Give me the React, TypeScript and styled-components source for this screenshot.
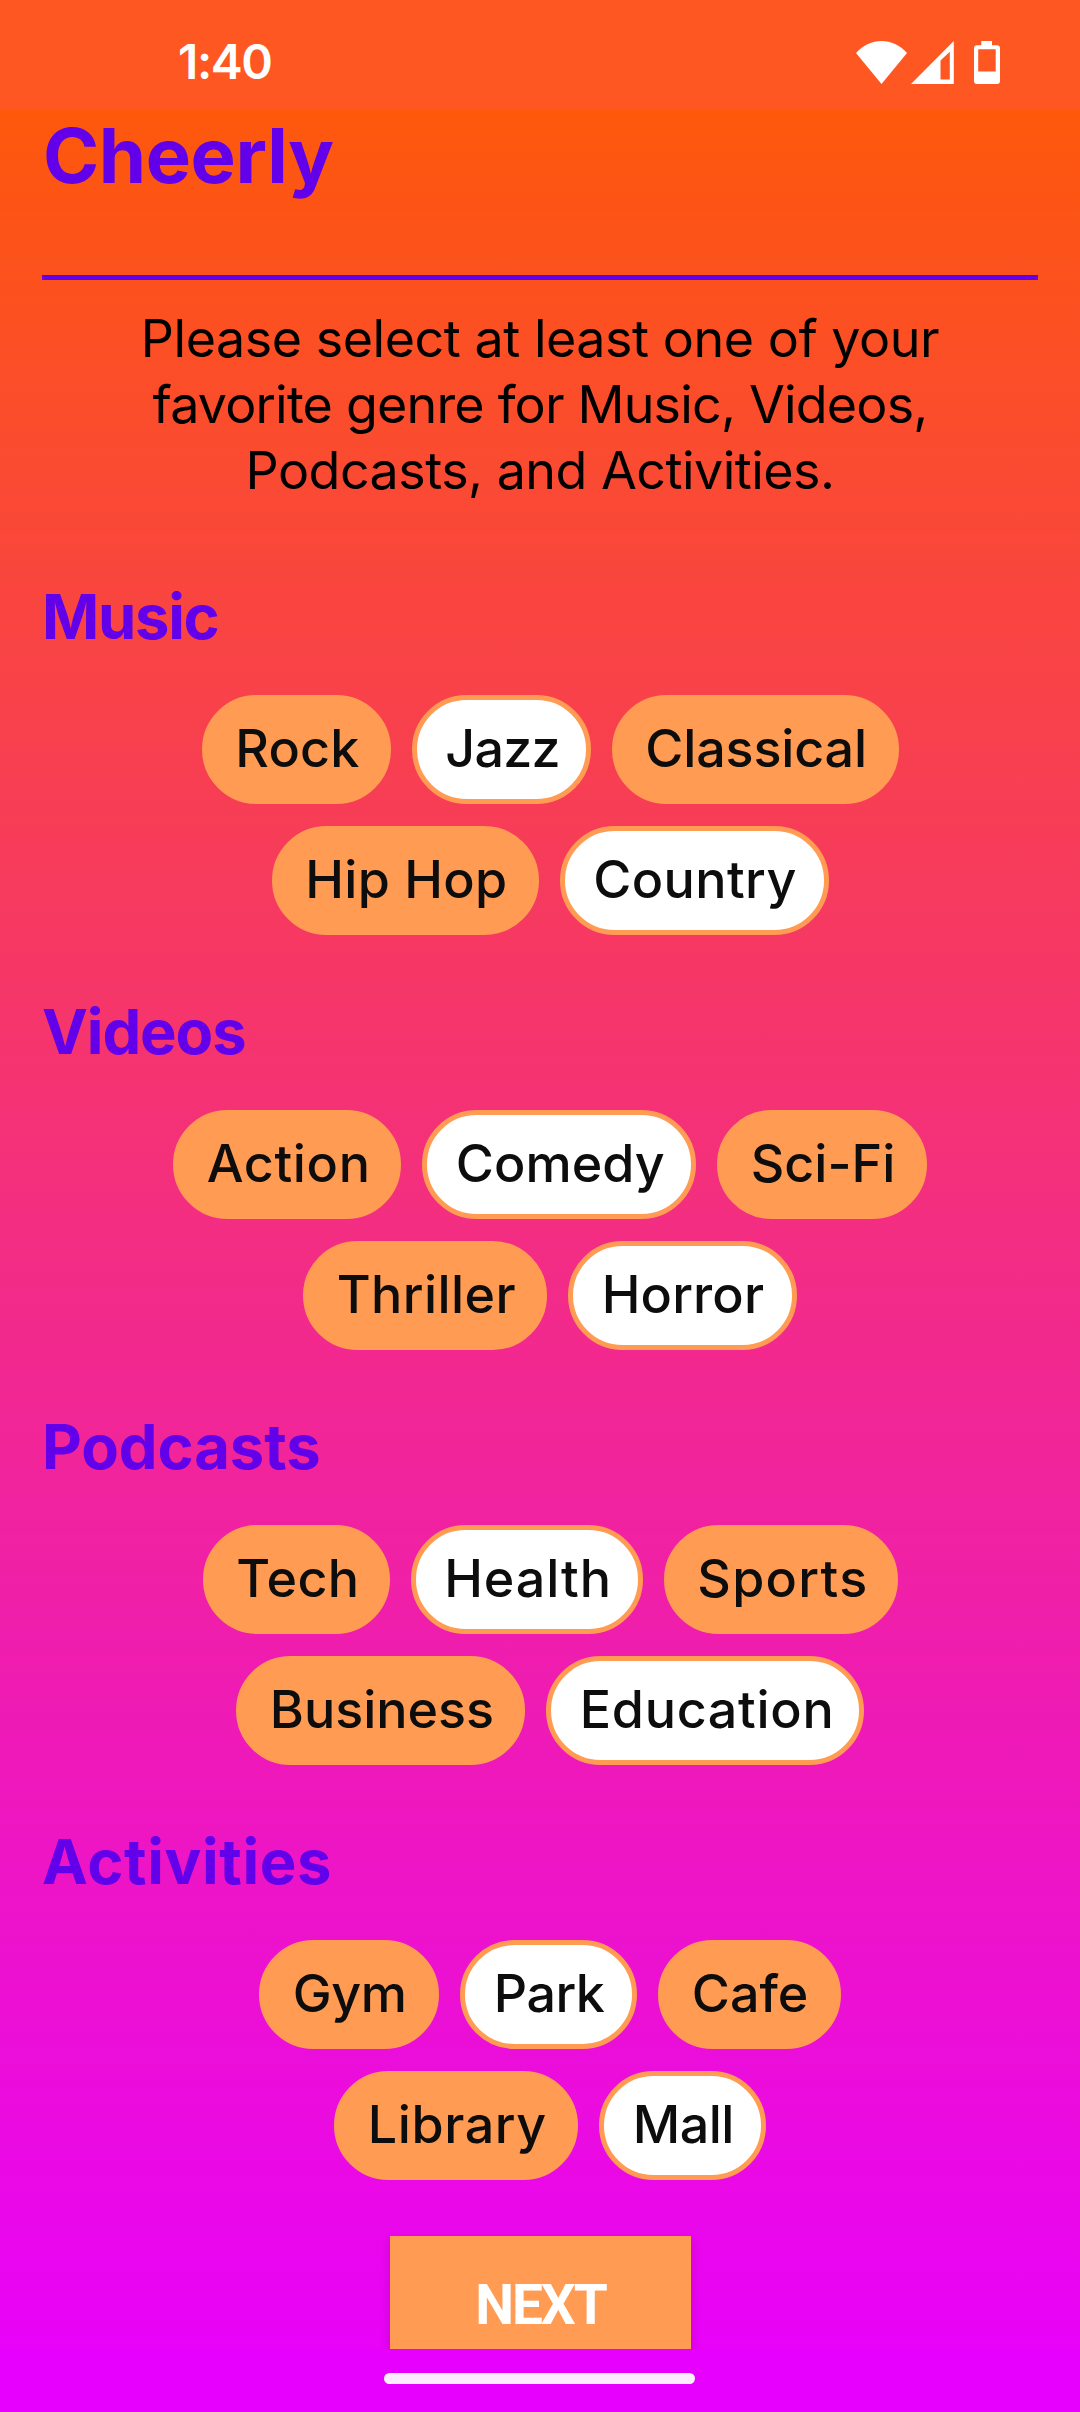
import React, { useState } from "react";
import styled, { createGlobalStyle } from "styled-components";

const colors = {
  status: "#ff5722",
  gradientTop: "#ff5c00",
  gradientBottom: "#e800ff",
  accent: "#6200ea",
  chip: "#ff9b52",
  chipText: "#0d0d0d",
};

const GlobalStyle = createGlobalStyle`
  body {
    margin: 0;
    font-family: Inter, Roboto, sans-serif;
  }
`;

const Screen = styled.div`
  display: flex;
  flex-direction: column;
  width: 1080px;
  height: 2412px;
  overflow: hidden;
  background: linear-gradient(to bottom, ${colors.gradientTop}, ${colors.gradientBottom});
`;

const StatusBar = styled.header`
  display: flex;
  flex: none;
  align-items: flex-start;
  justify-content: space-between;
  box-sizing: border-box;
  height: 110px;
  padding: 0 80px 0 178px;
  background: ${colors.status};
`;

const Clock = styled.span`
  color: #fff;
  font-size: 48px;
  font-weight: 570;
  line-height: 124px;
  letter-spacing: -1.4px;
`;

const StatusIcons = styled.svg`
  display: block;
  width: 144px;
  height: 43px;
  margin-top: 41px;
  fill: #fff;
`;

const Content = styled.main`
  display: flex;
  flex: none;
  flex-direction: column;
  height: 2239px;
  overflow: hidden;
`;

const TitleBar = styled.div`
  flex: none;
  box-sizing: border-box;
  height: 170px;
  margin: 0 42px;
  border-bottom: 5px solid ${colors.accent};
`;

const Title = styled.h1`
  margin: 0 0 0 1px;
  color: ${colors.accent};
  font-size: 76px;
  font-weight: 650;
  line-height: 91px;
  letter-spacing: -0.4px;
`;

const Intro = styled.p`
  display: flex;
  flex: none;
  flex-direction: column;
  align-items: center;
  margin: 26px 0 76px;
  color: #000;
  font-size: 52px;
  font-weight: 400;
  line-height: 66px;
`;

const IntroLine = styled.span<{ $tracking: number }>`
  letter-spacing: ${(p) => p.$tracking}px;
  white-space: nowrap;
`;

const Sections = styled.div`
  display: flex;
  flex: none;
  flex-direction: column;
  gap: 60px;
`;

const Section = styled.section`
  display: flex;
  flex-direction: column;
`;

const SectionTitle = styled.h2<{ $tracking: number }>`
  margin: 0 0 41px 42px;
  color: ${colors.accent};
  font-size: 61.5px;
  font-weight: 650;
  line-height: 74px;
  letter-spacing: ${(p) => p.$tracking}px;
`;

const ChipRows = styled.div`
  display: flex;
  flex-direction: column;
  gap: 22px;
  padding-left: 20.5px;
`;

const ChipRow = styled.div`
  display: flex;
  justify-content: center;
  gap: 21px;
`;

const Chip = styled.button<{ $selected: boolean; $width: number; $tracking: number }>`
  display: flex;
  flex: none;
  align-items: center;
  box-sizing: border-box;
  width: ${(p) => p.$width}px;
  height: 109px;
  padding: 0 0 1px 28.5px;
  border: 5px solid ${colors.chip};
  border-radius: 55px;
  background: ${(p) => (p.$selected ? "#fff" : colors.chip)};
  color: ${colors.chipText};
  font-family: inherit;
  font-size: 52px;
  font-weight: 500;
  line-height: 66px;
  letter-spacing: ${(p) => p.$tracking}px;
  white-space: nowrap;
`;

const NextButton = styled.button`
  flex: none;
  align-self: center;
  width: 301px;
  height: 138px;
  margin: 56px 0 0 1px;
  padding: 0;
  border: 0;
  background: ${colors.chip};
  box-shadow: 0 5px 10px rgba(0, 0, 0, 0.15);
  color: #fff;
  font-family: Roboto, sans-serif;
  font-size: 55px;
  font-weight: 700;
  line-height: 138px;
  letter-spacing: -2.1px;
`;

const NavigationArea = styled.footer`
  display: flex;
  flex: none;
  justify-content: center;
  height: 63px;
  background: ${colors.gradientBottom};
`;

const HomeIndicator = styled.div`
  width: 311px;
  height: 11px;
  margin: 24px 1px 0 0;
  border-radius: 6px;
  background: #fdebff;
`;

type Genre = { label: string; width: number; tracking: number };
type Group = { title: string; tracking: number; rows: Genre[][] };

const genre = (label: string, width: number, tracking: number): Genre => ({ label, width, tracking });

const groups: Group[] = [
  {
    title: "Music",
    tracking: -1.3,
    rows: [
      [genre("Rock", 189, 0.2), genre("Jazz", 179, -0.75), genre("Classical", 287, -0.15)],
      [genre("Hip Hop", 267, 0.3), genre("Country", 269, 0.4)],
    ],
  },
  {
    title: "Videos",
    tracking: -1.1,
    rows: [
      [genre("Action", 228, 0.65), genre("Comedy", 274, 0.05), genre("Sci-Fi", 210, 0)],
      [genre("Thriller", 244, 0.4), genre("Horror", 229, 0.15)],
    ],
  },
  {
    title: "Podcasts",
    tracking: -0.1,
    rows: [
      [genre("Tech", 187, 0.35), genre("Health", 232, 0.9), genre("Sports", 234, 1.3)],
      [genre("Business", 289, 0), genre("Education", 318, 0.7)],
    ],
  },
  {
    title: "Activities",
    tracking: 0.65,
    rows: [
      [genre("Gym", 180, -0.4), genre("Park", 177, -0.5), genre("Cafe", 183, 0)],
      [genre("Library", 244, 0.6), genre("Mall", 167, -0.5)],
    ],
  },
];

const initialSelection = ["Jazz", "Country", "Comedy", "Horror", "Health", "Education", "Park", "Mall"];

export default function App() {
  const [selected, setSelected] = useState<string[]>(initialSelection);

  const toggle = (label: string) =>
    setSelected((current) =>
      current.includes(label) ? current.filter((item) => item !== label) : [...current, label]
    );

  return (
    <>
      <GlobalStyle />
      <Screen>
        <StatusBar>
          <Clock>1:40</Clock>
          <StatusIcons viewBox="0 0 144 43" aria-hidden="true">
            <path d="M0 12 C14 -4 37 -4 51 12 L25.5 43 Z" />
            <path fillRule="evenodd" d="M55 43 L97.8 0 V43 Z M84.5 19.5 V38.5 H93.8 V10.7 Z" />
            <path
              fillRule="evenodd"
              d="M125.3 0 H136 V4.3 H141 Q144 4.3 144 7.3 V40 Q144 43 141 43 H121 Q118 43 118 40 V7.3 Q118 4.3 121 4.3 H125.3 Z M122.2 8.3 V30.5 H139.7 V8.3 Z"
            />
          </StatusIcons>
        </StatusBar>

        <Content>
          <TitleBar>
            <Title>Cheerly</Title>
          </TitleBar>

          <Intro>
            <IntroLine $tracking={-0.47}>Please select at least one of your</IntroLine>
            <IntroLine $tracking={-0.81}>favorite genre for Music, Videos,</IntroLine>
            <IntroLine $tracking={-0.53}>Podcasts, and Activities.</IntroLine>
          </Intro>

          <Sections>
            {groups.map((group) => (
              <Section key={group.title}>
                <SectionTitle $tracking={group.tracking}>{group.title}</SectionTitle>
                <ChipRows>
                  {group.rows.map((row) => (
                    <ChipRow key={row[0].label}>
                      {row.map((item) => (
                        <Chip
                          key={item.label}
                          type="button"
                          $selected={selected.includes(item.label)}
                          $width={item.width}
                          $tracking={item.tracking}
                          aria-pressed={selected.includes(item.label)}
                          onClick={() => toggle(item.label)}
                        >
                          {item.label}
                        </Chip>
                      ))}
                    </ChipRow>
                  ))}
                </ChipRows>
              </Section>
            ))}
          </Sections>

          <NextButton type="button">NEXT</NextButton>
        </Content>

        <NavigationArea>
          <HomeIndicator />
        </NavigationArea>
      </Screen>
    </>
  );
}
